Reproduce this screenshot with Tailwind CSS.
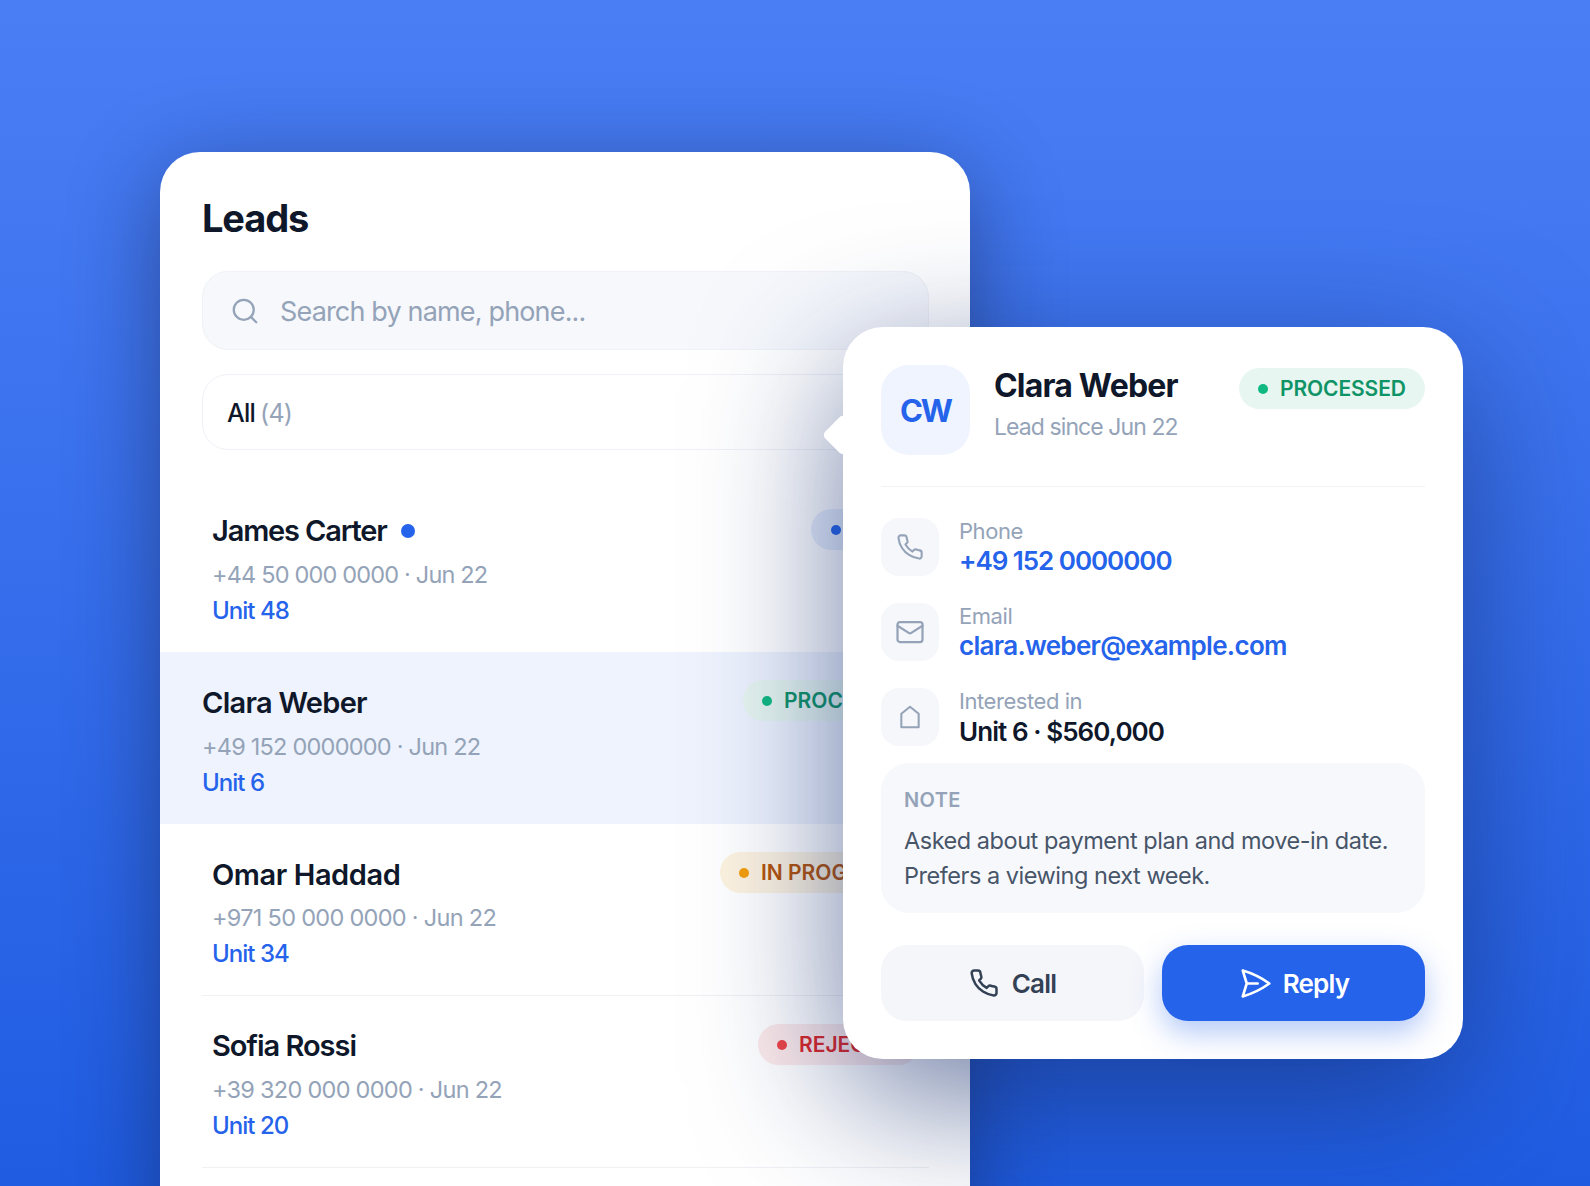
<!DOCTYPE html>
<html>
<head>
<meta charset="utf-8">
<script src="https://cdn.jsdelivr.net/npm/@tailwindcss/browser@4"></script>
<title>Leads</title>
</head>
<body class="h-[1186px] overflow-hidden bg-gradient-to-b from-[#4a7ef5] to-[#1f5ce2] font-[Inter,sans-serif]">
  <div class="relative w-[1590px] h-[1186px] overflow-hidden pt-[152px] pl-[160px]">
    <!-- Leads card -->
    <div class="w-[810px] h-[1100px] bg-white rounded-[40px] shadow-[0_20px_90px_rgba(15,23,42,0.45)]">
      <div class="pl-[42px] pr-[41px] pt-[43px]">
        <h1 class="text-[38px] leading-[46px] font-bold text-[#0f172a] tracking-[-0.03em]">Leads</h1>
        <div class="mt-[30px] h-[79px] flex items-center gap-[20px] pl-[27px] pt-[3px] rounded-[26px] bg-[#f6f8fc] border border-[#eff2f7]">
          <svg class="w-[30px] h-[30px] mt-[-3px] text-[#94a3b8]" fill="none" viewBox="0 0 24 24" stroke="currentColor" stroke-width="1.8" stroke-linecap="round" stroke-linejoin="round"><circle cx="11" cy="11" r="8"/><path d="m21 21-4.3-4.3"/></svg>
          <span class="text-[27px] text-[#94a3b8] tracking-[-0.031em]">Search by name, phone...</span>
        </div>
        <div class="mt-[24px] h-[76px] flex items-center px-[24px] pt-[3px] rounded-[26px] border border-[#eef1f6] text-[25px] tracking-[-0.03em]">
          <span class="font-medium text-[#0f172a]">All</span><span class="ml-[5px] text-[#94a3b8]">(4)</span>
        </div>
      </div>
      <div class="mt-[30px]">
        <!-- James -->
        <div class="ml-[42px] mr-[41px] px-[10px] h-[172px] pt-[33px] flex justify-between items-start">
          <div>
            <div class="flex items-center gap-[14px] text-[29px] leading-[36px] font-semibold text-[#0f172a] tracking-[-0.04em]">James Carter <span class="w-[14px] h-[14px] rounded-full bg-[#2563eb]"></span></div>
            <div class="mt-[8px] text-[23.5px] leading-[36px] text-[#94a3b8] tracking-[-0.035em]">+44 50 000 0000 · Jun 22</div>
            <div class="text-[24px] leading-[36px] font-medium text-[#2563eb] tracking-[-0.04em]">Unit 48</div>
          </div>
          <span class="w-[108px] h-[41px] mt-[-4px] flex items-center gap-[12px] pl-[20px] rounded-full bg-[#e8effd] text-[21px] font-semibold text-[#2563eb]"><i class="w-[10px] h-[10px] rounded-full bg-[#2563eb]"></i>NEW</span>
        </div>
        <!-- Clara, selected -->
        <div class="pl-[42px] pr-[41px] h-[172px] pt-[33px] flex justify-between items-start bg-[#eef3fd]">
          <div>
            <div class="text-[29px] leading-[36px] font-semibold text-[#0f172a] tracking-[-0.025em]">Clara Weber</div>
            <div class="mt-[8px] text-[23.5px] leading-[36px] text-[#94a3b8] tracking-[-0.033em]">+49 152 0000000 · Jun 22</div>
            <div class="text-[24px] leading-[36px] font-medium text-[#2563eb] tracking-[-0.04em]">Unit 6</div>
          </div>
          <span class="w-[186px] h-[41px] mt-[-5px] flex items-center gap-[12px] pl-[19px] rounded-full bg-[#e7f6f0] text-[21px] font-semibold text-[#0f9467]"><i class="w-[10px] h-[10px] rounded-full bg-[#10b981]"></i>PROCESSED</span>
        </div>
        <!-- Omar -->
        <div class="ml-[42px] mr-[41px] px-[10px] h-[172px] pt-[33px] flex justify-between items-start border-b border-[#eff1f5]">
          <div>
            <div class="text-[29px] leading-[36px] font-semibold text-[#0f172a] tracking-[-0.015em]">Omar Haddad</div>
            <div class="mt-[7px] text-[23.5px] leading-[36px] text-[#94a3b8] tracking-[-0.03em]">+971 50 000 0000 · Jun 22</div>
            <div class="text-[24px] leading-[36px] font-medium text-[#2563eb] tracking-[-0.04em]">Unit 34</div>
          </div>
          <span class="w-[199px] h-[41px] mt-[-5px] flex items-center gap-[12px] pl-[19px] rounded-full bg-[#fdf3e0] text-[21px] font-semibold text-[#b45309]"><i class="w-[10px] h-[10px] rounded-full bg-[#f59e0b]"></i>IN PROGRESS</span>
        </div>
        <!-- Sofia -->
        <div class="ml-[42px] mr-[41px] px-[10px] h-[172px] pt-[32px] flex justify-between items-start border-b border-[#eff1f5]">
          <div>
            <div class="text-[29px] leading-[36px] font-semibold text-[#0f172a] tracking-[-0.035em]">Sofia Rossi</div>
            <div class="mt-[8px] text-[23.5px] leading-[36px] text-[#94a3b8] tracking-[-0.031em]">+39 320 000 0000 · Jun 22</div>
            <div class="text-[24px] leading-[36px] font-medium text-[#2563eb] tracking-[-0.04em]">Unit 20</div>
          </div>
          <span class="w-[161px] h-[41px] mt-[-4px] flex items-center gap-[12px] pl-[19px] rounded-full bg-[#fdeaea] text-[21px] font-semibold text-[#dc2626]"><i class="w-[10px] h-[10px] rounded-full bg-[#ef4444]"></i>REJECTED</span>
        </div>
      </div>
    </div>

    <!-- Lead detail popover -->
    <div class="absolute left-[843px] top-[327px] w-[620px] h-[732px] bg-white rounded-[40px] px-[38px] pt-[38px] shadow-[0_40px_140px_rgba(23,47,110,0.62)]">
      <div class="absolute left-[-15px] top-[93px] w-[30px] h-[30px] rotate-45 rounded-[5px] bg-white"></div>
      <div class="flex items-start pb-[31px] border-b border-[#f0f2f6]">
        <div class="w-[89px] h-[90px] pt-[2px] flex items-center justify-center rounded-[28px] bg-[#eff4ff] text-[31px] font-bold text-[#2563eb] tracking-[-0.07em]">CW</div>
        <div class="ml-[24px] flex-1">
          <div class="pt-[1px] text-[32px] leading-[40px] font-bold text-[#0f172a] tracking-[-0.025em]">Clara Weber</div>
          <div class="mt-[6px] text-[23px] leading-[30px] text-[#94a3b8] tracking-[-0.04em]">Lead since Jun 22</div>
        </div>
        <span class="w-[186px] h-[41px] mt-[3px] pt-[1px] flex items-center gap-[12px] pl-[19px] rounded-full bg-[#e7f6f0] text-[21px] font-semibold text-[#0f9467] tracking-[-0.005em]"><i class="w-[10px] h-[10px] rounded-full bg-[#10b981]"></i>PROCESSED</span>
      </div>
      <div class="mt-[31px] flex flex-col gap-[27px]">
        <div class="h-[58px] flex items-center gap-[20px]">
          <div class="w-[58px] h-[58px] flex items-center justify-center rounded-[18px] bg-[#f6f7fb]">
            <svg class="w-[28px] h-[28px] text-[#94a3b8]" fill="none" viewBox="0 0 24 24" stroke="currentColor" stroke-width="1.8" stroke-linecap="round" stroke-linejoin="round"><path d="M22 16.92v3a2 2 0 0 1-2.18 2 19.79 19.79 0 0 1-8.63-3.07 19.5 19.5 0 0 1-6-6 19.79 19.79 0 0 1-3.07-8.67A2 2 0 0 1 4.11 2h3a2 2 0 0 1 2 1.72 12.84 12.84 0 0 0 .7 2.81 2 2 0 0 1-.45 2.11L8.09 9.91a16 16 0 0 0 6 6l1.27-1.27a2 2 0 0 1 2.11-.45 12.84 12.84 0 0 0 2.81.7A2 2 0 0 1 22 16.92z"/></svg>
          </div>
          <div>
            <div class="text-[22px] leading-[27px] text-[#94a3b8] tracking-[-0.02em]">Phone</div>
            <div class="text-[26px] leading-[31px] font-semibold text-[#2563eb] tracking-[-0.04em]">+49 152 0000000</div>
          </div>
        </div>
        <div class="h-[58px] flex items-center gap-[20px]">
          <div class="w-[58px] h-[58px] flex items-center justify-center rounded-[18px] bg-[#f6f7fb]">
            <svg class="w-[30px] h-[30px] text-[#94a3b8]" fill="none" viewBox="0 0 24 24" stroke="currentColor" stroke-width="1.8" stroke-linecap="round" stroke-linejoin="round"><rect x="2" y="4" width="20" height="16" rx="2"/><path d="m22 7-8.97 5.7a1.94 1.94 0 0 1-2.06 0L2 7"/></svg>
          </div>
          <div>
            <div class="text-[22px] leading-[27px] text-[#94a3b8] tracking-[-0.02em]">Email</div>
            <div class="text-[26px] leading-[31px] font-semibold text-[#2563eb] tracking-[-0.027em]">clara.weber@example.com</div>
          </div>
        </div>
        <div class="h-[58px] flex items-center gap-[20px]">
          <div class="w-[58px] h-[58px] flex items-center justify-center rounded-[18px] bg-[#f6f7fb]">
            <svg class="w-[26px] h-[26px] text-[#94a3b8]" fill="none" viewBox="0 0 24 24" stroke="currentColor" stroke-width="1.9" stroke-linecap="round" stroke-linejoin="round"><path d="M4 9 12 2.5 20 9v12.5H4z"/></svg>
          </div>
          <div>
            <div class="text-[22px] leading-[27px] text-[#94a3b8] tracking-[-0.02em]">Interested in</div>
            <div class="pt-[1px] text-[26px] leading-[31px] font-semibold text-[#0f172a] tracking-[-0.036em]">Unit 6 · $560,000</div>
          </div>
        </div>
      </div>
      <div class="mt-[17px] h-[150px] rounded-[28px] bg-[#f7f8fc] px-[23px] pt-[24px]">
        <div class="text-[20px] leading-[26px] font-semibold text-[#94a3b8] tracking-[0.02em]">NOTE</div>
        <p class="mt-[11px] text-[23.5px] leading-[34.5px] text-[#475569] tracking-[-0.02em]">Asked about payment plan and move-in date.<br>Prefers a viewing next week.</p>
      </div>
      <div class="mt-[32px] flex gap-[18px]">
        <button class="w-[263px] h-[76px] flex items-center justify-center gap-[13px] rounded-[26px] bg-[#f5f6fa] text-[26px] font-semibold text-[#334155] tracking-[-0.03em]">
          <svg class="w-[30px] h-[30px]" fill="none" viewBox="0 0 24 24" stroke="currentColor" stroke-width="2" stroke-linecap="round" stroke-linejoin="round"><path d="M22 16.92v3a2 2 0 0 1-2.18 2 19.79 19.79 0 0 1-8.63-3.07 19.5 19.5 0 0 1-6-6 19.79 19.79 0 0 1-3.07-8.67A2 2 0 0 1 4.11 2h3a2 2 0 0 1 2 1.72 12.84 12.84 0 0 0 .7 2.81 2 2 0 0 1-.45 2.11L8.09 9.91a16 16 0 0 0 6 6l1.27-1.27a2 2 0 0 1 2.11-.45 12.84 12.84 0 0 0 2.81.7A2 2 0 0 1 22 16.92z"/></svg>
          Call
        </button>
        <button class="w-[263px] h-[76px] flex items-center justify-center gap-[10px] rounded-[26px] bg-[#2563eb] text-[26px] font-semibold text-white tracking-[-0.03em] shadow-[0_12px_30px_rgba(37,99,235,0.35)]">
          <svg class="w-[35px] h-[35px]" fill="none" viewBox="0 0 24 24" stroke="currentColor" stroke-width="1.8" stroke-linecap="round" stroke-linejoin="round"><path d="M6 12 3.269 3.125A59.769 59.769 0 0 1 21.485 12 59.768 59.768 0 0 1 3.27 20.875L5.999 12Zm0 0h7.5"/></svg>
          Reply
        </button>
      </div>
    </div>
  </div>
</body>
</html>
